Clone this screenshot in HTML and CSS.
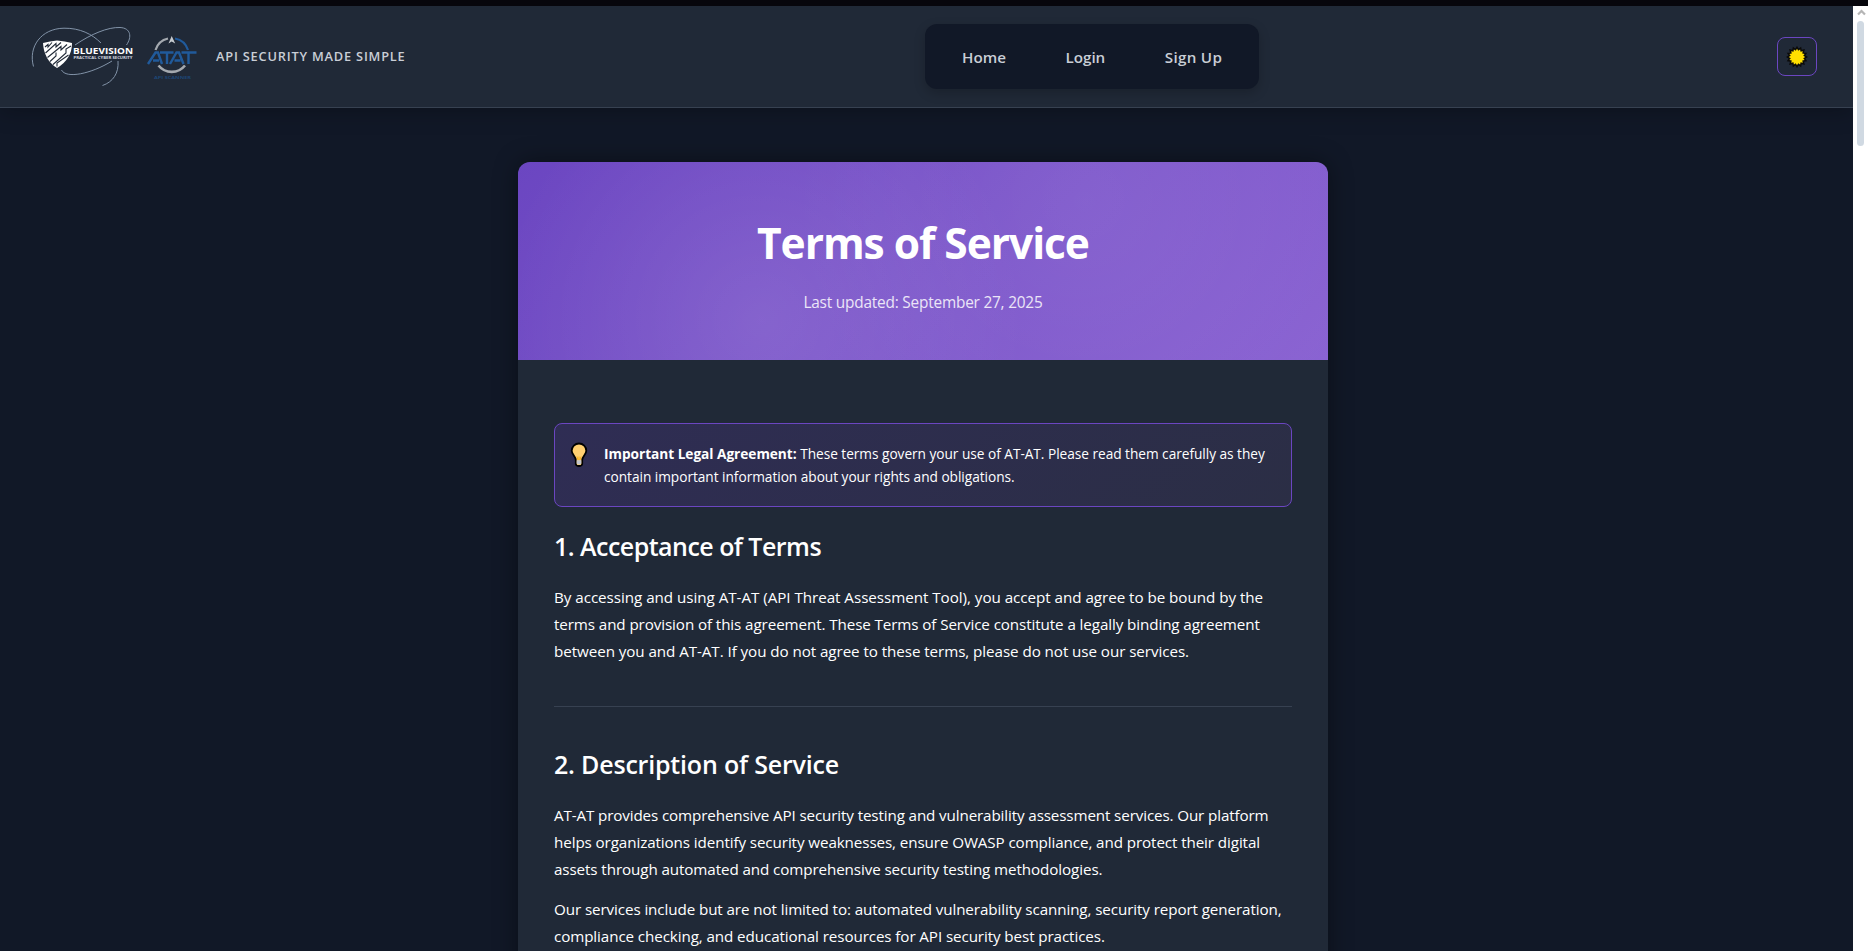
FILE: index.html
```html
<!DOCTYPE html>
<html lang="en">
<head>
<meta charset="utf-8">
<title>Terms of Service</title>
<link rel="stylesheet" href="styles.css">
</head>
<body>
<div class="strip"></div>
<div class="window">
  <div class="page">
    <header class="header">
      <div class="brand">
        <svg class="logo-bv" width="108" height="64" viewBox="30 26 108 64" fill="none">
          <g stroke="#8293a8" stroke-width="1">
            <path d="M33.500 66.500C28 47 41 28.500 64 28.200C80 28 92 34 101 43"/>
            <path d="M75 45C91 34 108 27 120 27.500C131 28 132 37 126.500 45"/>
            <path d="M61.500 70C66 79 91 74 112 61"/>
            <path d="M118 61C119 73 113 82 102.500 85.500"/>
          </g>
          <path d="M43 43Q50 41 57 40.500Q65 41 72 43Q72 59 57 68Q44 60 43 43Z" fill="#fff"/>
          <g stroke="#202937" stroke-width="1.100">
            <path d="M45 47L48 44.500V47L52 42.500M45.500 53L56 43.500V47L61 42.500M47.500 57.500L61 46.500V50L67 44.500M50 61.500L56 56V52.500M53 64.500L66 53V49L71 46M57 66.500V63L68.500 55"/>
          </g>
          <text x="73" y="54" class="bv-name" textLength="60" lengthAdjust="spacingAndGlyphs">BLUEVISION</text>
          <text x="73.500" y="59.300" class="bv-sub" textLength="59" lengthAdjust="spacingAndGlyphs">PRACTICAL CYBER SECURITY</text>
        </svg>
        <svg class="logo-at" width="54" height="50" viewBox="145 33 54 50" fill="none">
          <path d="M155.500 50A17 17 0 0 1 168 38.500" stroke="#a4a9af" stroke-width="2.200"/>
          <path d="M175 38.500A17 17 0 0 1 188 50" stroke="#205a9b" stroke-width="2.200"/>
          <path d="M158.500 65.500A17 17 0 0 0 185 65.500" stroke="#a4a9af" stroke-width="2.600"/>
          <path d="M171.700 36L175.200 43.500L171.700 41.500L168.500 43.500Z" fill="#c6cacf"/>
          <path d="M148 64L155.500 52.500H158L162 64M153 60.500H159M160 52.500H173.500M167 52.500V64M170 64L176.500 52.500H179L183.500 64M174.500 60.500H180.500M181.500 52.500H196.500M188.500 52.500V64" stroke="#205a9b" stroke-width="2.400"/>
          <text x="154" y="79" class="at-sub" textLength="37" lengthAdjust="spacingAndGlyphs">API SCANNER</text>
        </svg>
        <span class="tagline">API SECURITY MADE SIMPLE</span>
      </div>
      <nav class="nav"><a>Home</a><a>Login</a><a class="signup">Sign Up</a></nav>
      <button class="theme" aria-label="Toggle theme">
        <svg width="22" height="22" viewBox="-11 -11 22 22"><path class="sun" d="M8.200 0L6.200 1.200L7.600 3.100L5.200 3.500L5.800 5.800L3.500 5.200L3.100 7.600L1.200 6.200L0 8.200L-1.200 6.200L-3.100 7.600L-3.500 5.200L-5.800 5.800L-5.200 3.500L-7.600 3.100L-6.200 1.200L-8.200 0L-6.200 -1.200L-7.600 -3.100L-5.200 -3.500L-5.800 -5.800L-3.500 -5.200L-3.100 -7.600L-1.200 -6.200L0 -8.200L1.200 -6.200L3.100 -7.600L3.500 -5.200L5.800 -5.800L5.200 -3.500L7.600 -3.100L6.200 -1.200Z"/></svg>
      </button>
    </header>
    <main class="main">
      <article class="card">
        <div class="hero">
          <h1>Terms of Service</h1>
          <p>Last updated: September 27, 2025</p>
        </div>
        <div class="content">
          <div class="notice">
            <svg class="bulb" width="18" height="26" viewBox="0 0 18 26">
              <path d="M9 1.500A7.300 7.300 0 0 0 1.700 8.800C1.700 12.500 5.800 14.500 5.800 18V22Q6 24 9 24T12.200 22V18C12.200 14.500 16.300 12.500 16.300 8.800A7.300 7.300 0 0 0 9 1.500Z" fill="#ffcf70" stroke="#000" stroke-width="1.800"/>
              <path d="M7 14.500L8 18M11 14.500L10 18M9 14.500V18" stroke="#f5b020" stroke-width="1" fill="none"/>
              <path d="M6.700 18.300H11.300V21.500Q9 23.500 6.700 21.500Z" fill="#c3c6cc"/>
            </svg>
            <p class="notice-text">
              <span class="line"><b>Important Legal Agreement:</b> These terms govern your use of AT-AT. Please read them carefully as they</span>
              <span class="line">contain important information about your rights and obligations.</span>
            </p>
          </div>
          <section>
            <h2 class="h-acceptance">1. Acceptance of Terms</h2>
            <p>
              <span class="line loose">By accessing and using AT-AT (API Threat Assessment Tool), you accept and agree to be bound by the</span>
              <span class="line">terms and provision of this agreement. These Terms of Service constitute a legally binding agreement</span>
              <span class="line mid">between you and AT-AT. If you do not agree to these terms, please do not use our services.</span>
            </p>
          </section>
          <section>
            <h2 class="h-description">2. Description of Service</h2>
            <p>
              <span class="line tight">AT-AT provides comprehensive API security testing and vulnerability assessment services. Our platform</span>
              <span class="line">helps organizations identify security weaknesses, ensure OWASP compliance, and protect their digital</span>
              <span class="line">assets through automated and comprehensive security testing methodologies.</span>
            </p>
            <p>
              <span class="line">Our services include but are not limited to: automated vulnerability scanning, security report generation,</span>
              <span class="line">compliance checking, and educational resources for API security best practices.</span>
            </p>
          </section>
        </div>
      </article>
    </main>
  </div>
  <div class="scrollbar"><svg width="9" height="7" viewBox="0 0 9 7"><path d="M1 5.500L4.500 2L8 5.500" fill="none" stroke="#b5b5b5" stroke-width="2.200"/></svg><div class="thumb"></div></div>
</div>
</body>
</html>
```
FILE: styles.css
```css
* { box-sizing: border-box; }
body { margin: 0; height: 951px; overflow: hidden; background: #111827; color: #fff; font-family: "Open Sans", "Noto Sans", sans-serif; }
p, h1, h2 { margin: 0; }
.strip { height: 6px; background: #07060c; }
.window { display: flex; height: 945px; }
.page { width: 1853px; overflow: hidden; }
.header { display: flex; height: 102px; background: #202937; border-bottom: 1px solid #374151; padding: 18px 36px 0 30px; align-items: flex-start; box-shadow: 0 4px 20px rgba(0,0,0,.25); }
.brand { display: flex; width: 895px; height: 66px; }
.logo-bv { margin-top: 2px; }
.logo-at { margin: 9px 0 0 7px; }
.bv-name { font: 700 9.600px "Open Sans", sans-serif; fill: #fff; }
.bv-sub { font: 700 3.600px "Open Sans", sans-serif; fill: #d5dae0; }
.at-sub { font: 700 4px "Open Sans", sans-serif; fill: #1d4675; }
.tagline { margin: 22px 0 0 17px; font-size: 12.800px; line-height: 20px; font-weight: 600; letter-spacing: .8px; color: #c9ced6; white-space: nowrap; }
.nav { display: flex; gap: 59.500px; width: 334px; height: 65px; background: #111827; border-radius: 12px; padding: 22px 0 0 37px; box-shadow: 0 4px 12px rgba(0,0,0,.2); }
.nav a { font-size: 15.200px; line-height: 22px; font-weight: 600; color: #c9ced6; white-space: nowrap; }
.nav .signup { letter-spacing: .3px; }
.theme { margin: 13px 0 0 518px; width: 40px; height: 39px; border: 1px solid #6b46c1; border-radius: 8px; background: none; padding: 0; display: grid; place-items: center; }
.sun { fill: #ffdf00; stroke: #0a0a0a; stroke-width: 3px; paint-order: stroke; }
.main { padding: 54px 0 0 518px; }
.card { width: 810px; height: 900px; background: #202937; border-radius: 12px 12px 0 0; overflow: hidden; box-shadow: 0 0 24px rgba(0,0,0,.4); }
.hero { height: 198px; padding-top: 51px; text-align: center; background: radial-gradient(circle at 30% 80%, rgba(255,255,255,.1), transparent 45%), radial-gradient(circle at 70% 20%, rgba(255,255,255,.06), transparent 50%), linear-gradient(135deg, #6b46c1, #8a63d2); }
.hero h1 { font-size: 42.500px; line-height: 60px; font-weight: 700; letter-spacing: -1.050px; }
.hero p { margin-top: 16px; font-size: 15.400px; line-height: 28px; letter-spacing: -.21px; color: #ebe5f7; }
.content { padding: 63px 36px 0; }
.notice { display: flex; height: 84px; padding: 18px 0 0 15px; border: 1px solid #6b46c1; border-radius: 8px; background: linear-gradient(135deg, #2f2d54, #2b2e45); }
.bulb { margin: 0 16px 0 0; }
.notice-text { font-size: 13.700px; line-height: 23px; letter-spacing: -.035px; }
.line { display: block; white-space: nowrap; }
section h2 { margin-top: 22px; font-size: 25px; line-height: 34px; font-weight: 600; white-space: nowrap; }
.h-acceptance { letter-spacing: -.53px; }
.h-description { letter-spacing: -.19px; }
section p { margin-top: 21px; font-size: 15.200px; line-height: 27px; letter-spacing: -.098px; }
section p + p { margin-top: 13px; }
.line.loose { letter-spacing: -.039px; }
.line.mid { letter-spacing: -.07px; }
.line.tight { letter-spacing: -.125px; }
section + section { margin-top: 41px; border-top: 1px solid #374151; }
section + section h2 { margin-top: 40px; }
.scrollbar { width: 15px; background: #fff; padding: 3px 3px 0 4px; }
.scrollbar svg { display: block; }
.thumb { width: 7px; height: 125px; margin-top: 5px; border-radius: 4px; background: #d0d9e2; }
```
